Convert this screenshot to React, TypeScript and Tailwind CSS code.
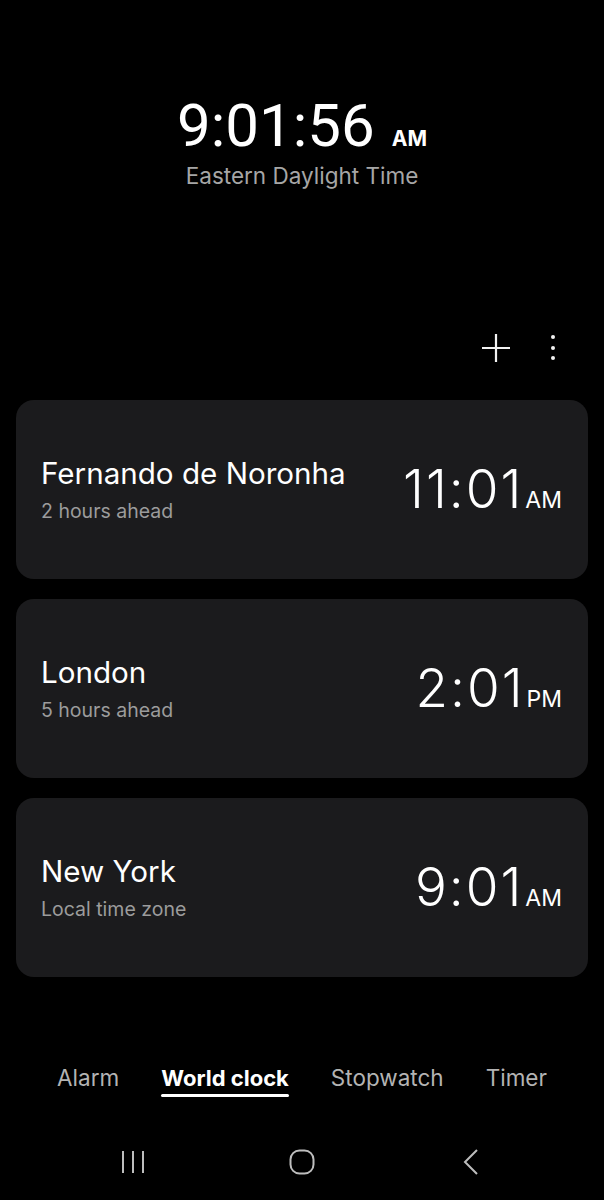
import React from 'react';

const cities = [
    { name: 'Fernando de Noronha', note: '2 hours ahead', time: '11:01', period: 'AM' },
    { name: 'London', note: '5 hours ahead', time: '2:01', period: 'PM' },
    { name: 'New York', note: 'Local time zone', time: '9:01', period: 'AM' },
];

const tabs = ['Alarm', 'World clock', 'Stopwatch', 'Timer'];

export default function App() {
    return (
        <div className="w-[604px] h-[1200px] bg-black flex flex-col font-['Inter',sans-serif] text-white overflow-hidden">
            {/* Current time */}
            <div className="pt-[96px] flex flex-col items-center">
                <div className="flex items-baseline gap-[17px]">
                    <span className="text-[60px] leading-none font-normal font-['Roboto',sans-serif]">9:01:56</span>
                    <span className="text-[21px] leading-none font-bold">AM</span>
                </div>
                <div className="mt-[9px] text-[22.5px] leading-none text-[#a6a6a6]">Eastern Daylight Time</div>
            </div>

            {/* Actions */}
            <div className="mt-[140px] h-[40px] flex items-center justify-end pr-[49px] gap-[40px]">
                <svg width="30" height="30" viewBox="0 0 30 30" fill="none" stroke="#f2f2f2" strokeWidth="2.2">
                    <path d="M15 1v28M1 15h28" />
                </svg>
                <div className="flex flex-col items-center gap-[6.5px]">
                    <span className="w-[4px] h-[4px] rounded-full bg-[#f2f2f2]" />
                    <span className="w-[4px] h-[4px] rounded-full bg-[#f2f2f2]" />
                    <span className="w-[4px] h-[4px] rounded-full bg-[#f2f2f2]" />
                </div>
            </div>

            {/* City cards */}
            <div className="mt-[32px] px-[16px] flex flex-col gap-[20px]">
                {cities.map((c) => (
                    <div key={c.name} className="h-[179px] rounded-[18px] bg-[#1b1b1d] flex items-center justify-between pl-[25px] pr-[26px]">
                        <div className="flex flex-col pt-[2px]">
                            <span className="text-[29.6px] leading-none">{c.name}</span>
                            <span className="mt-[13px] text-[19.5px] leading-none text-[#9c9c9c]">{c.note}</span>
                        </div>
                        <div className="flex items-baseline gap-[2px] pt-[1px]">
                            <span className="text-[53px] leading-none font-light tracking-[2px]">{c.time}</span>
                            <span className="text-[23px] leading-none">{c.period}</span>
                        </div>
                    </div>
                ))}
            </div>

            {/* Tabs */}
            <div className="mt-[90px] flex justify-center gap-[42px]">
                {tabs.map((t) => (
                    <div key={t} className="flex flex-col items-stretch">
                        <span className={t === 'World clock' ? 'text-[22px] leading-none font-bold text-white' : 'text-[22.5px] leading-none text-[#b3b3b3]'}>
                            {t}
                        </span>
                        <span className={t === 'World clock' ? 'mt-[5px] h-[3px] rounded-full bg-white' : 'mt-[5px] h-[3px]'} />
                    </div>
                ))}
            </div>

            {/* System nav */}
            <div className="mt-[52px] flex justify-center gap-[109px] items-center h-[26px]">
                <div className="w-[60px] flex justify-center">
                    <svg width="26" height="24" viewBox="0 0 26 24" fill="none" stroke="#bdbdbd" strokeWidth="2">
                        <path d="M3 1v22M13 1v22M23 1v22" />
                    </svg>
                </div>
                <div className="w-[60px] flex justify-center">
                    <svg width="26" height="26" viewBox="0 0 26 26" fill="none" stroke="#bdbdbd" strokeWidth="2">
                        <rect x="1.5" y="1.5" width="23" height="23" rx="9" />
                    </svg>
                </div>
                <div className="w-[60px] flex justify-center">
                    <svg width="16" height="26" viewBox="0 0 16 26" fill="none" stroke="#bdbdbd" strokeWidth="2">
                        <path d="M14 1L2 13l12 12" />
                    </svg>
                </div>
            </div>
        </div>
    );
}
